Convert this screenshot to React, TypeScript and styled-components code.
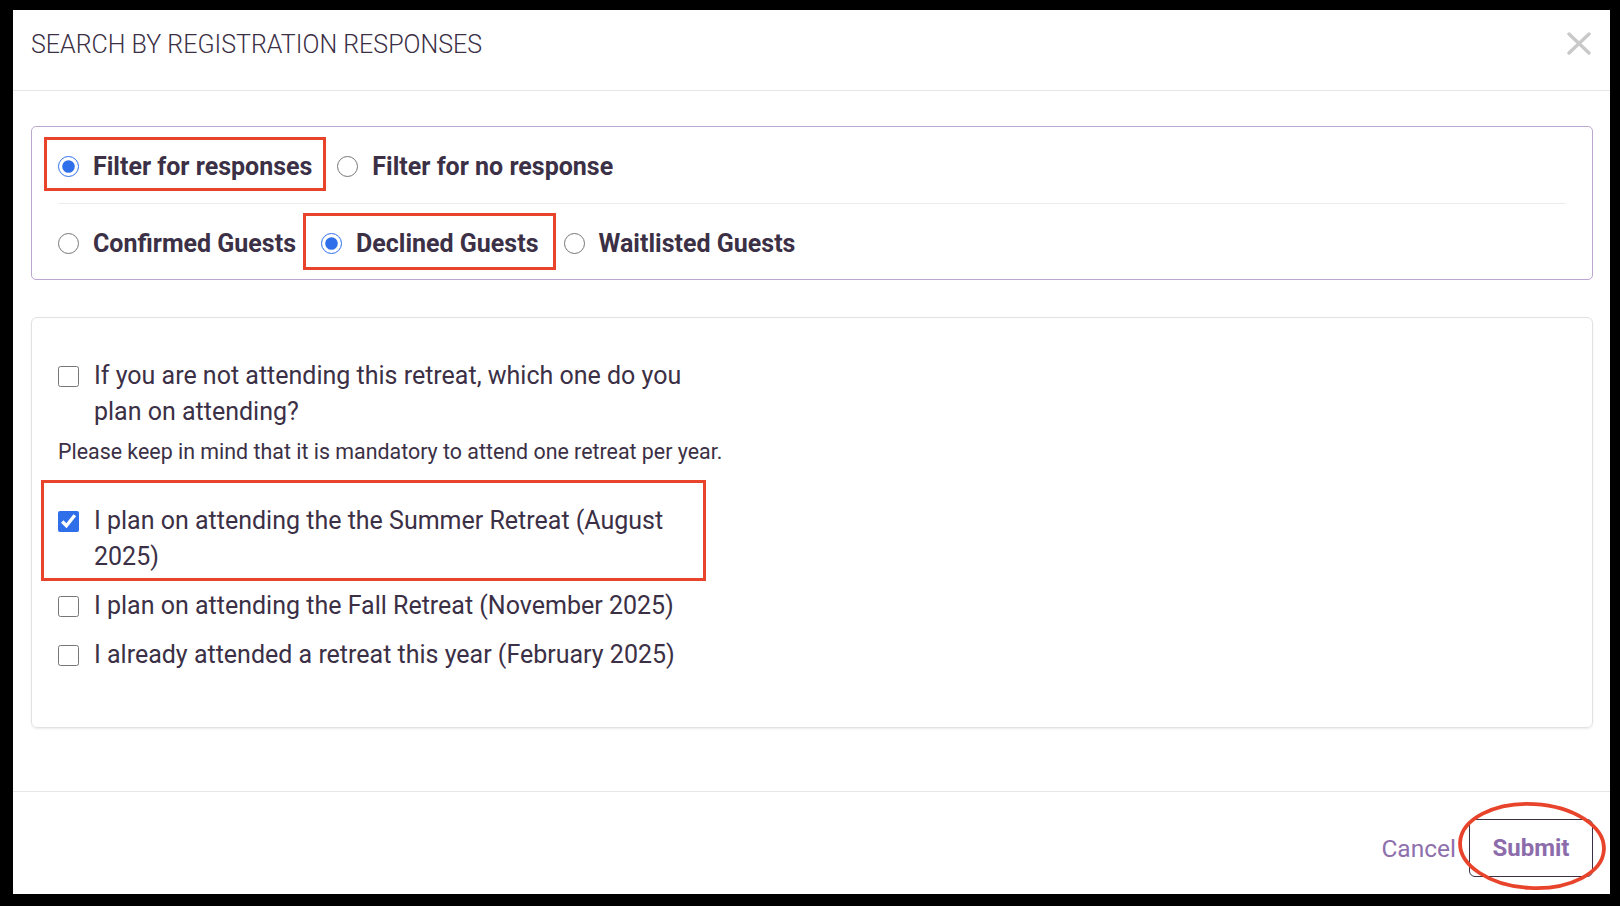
import React, { useState } from "react";
import styled, { createGlobalStyle } from "styled-components";

const GlobalStyle = createGlobalStyle`
  html, body {
    margin: 0;
    padding: 0;
    background: #000;
  }
  body {
    font-family: Roboto, "Liberation Sans", Arial, sans-serif;
    color: #3b3045;
  }
  * {
    box-sizing: border-box;
  }
`;

const ANNOTATION = "#e8432b";

const Frame = styled.div`
  width: 1620px;
  height: 906px;
  padding: 10px 10px 12px 13px;
  display: flex;
`;

const Modal = styled.div`
  flex: 1;
  background: #fff;
  display: flex;
  flex-direction: column;
`;

const Header = styled.div`
  height: 81px;
  padding: 21px 19px 0 18px;
  display: flex;
  justify-content: space-between;
  align-items: flex-start;
  border-bottom: 1px solid #e6e6e6;
`;

const Title = styled.h4`
  margin: 0;
  font-size: 25px;
  line-height: 28px;
  font-weight: 300;
  color: #3b3045;
`;

const CloseButton = styled.button`
  border: none;
  background: none;
  padding: 0;
  margin-top: 1px;
  width: 24px;
  height: 23px;
  cursor: pointer;
  display: flex;
`;

const Body = styled.div`
  flex: 1;
  padding: 35px 17px 0 18px;
  display: flex;
  flex-direction: column;
  gap: 37px;
`;

const FilterBox = styled.div`
  border: 1px solid #bca7d2;
  border-radius: 5px;
  padding: 0 26px;
`;

const Row = styled.div<{ $height: number; $shift?: number }>`
  height: ${(p) => p.$height}px;
  padding-top: ${(p) => p.$shift ?? 0}px;
  display: flex;
  align-items: center;
  gap: 25px;
`;

const Divider = styled.div`
  height: 1px;
  background: #ececec;
`;

const Option = styled.label`
  position: relative;
  display: flex;
  align-items: center;
  gap: 14px;
  height: 32px;
  font-size: 25px;
  font-weight: 700;
  color: #3b3045;
  cursor: pointer;
`;

const Radio = styled.input.attrs({ type: "radio" })`
  width: 21px;
  height: 21px;
  margin: 0;
  accent-color: #2f6fea;
  flex-shrink: 0;
`;

const Highlight = styled.span<{ $inset: string }>`
  position: absolute;
  inset: ${(p) => p.$inset};
  border: 3px solid ${ANNOTATION};
  pointer-events: none;
`;

const QuestionBox = styled.div`
  border: 1px solid #e2e2e2;
  border-radius: 6px;
  box-shadow: 0 1px 2px rgba(0, 0, 0, 0.08);
  padding: 40px 26px 54px;
`;

const Column = styled.div`
  width: 720px;
  display: flex;
  flex-direction: column;
  align-items: flex-start;
`;

const Check = styled.label<{ $gap?: number }>`
  position: relative;
  display: flex;
  align-items: flex-start;
  gap: 15px;
  margin-top: ${(p) => p.$gap ?? 0}px;
  font-size: 25px;
  line-height: 36px;
  color: #3b3045;
  cursor: pointer;
`;

const CheckText = styled.span`
  max-width: 614px;
`;

const Checkbox = styled.input.attrs({ type: "checkbox" })`
  width: 21px;
  height: 21px;
  margin: 8px 0 0;
  accent-color: #2f6fea;
  flex-shrink: 0;
`;

const Help = styled.p`
  margin: 10px 0 0;
  font-size: 21.4px;
  line-height: 24px;
  color: #3b3045;
`;

const Footer = styled.div`
  height: 103px;
  border-top: 1px solid #e6e6e6;
  padding: 10px 17px 0 0;
  display: flex;
  justify-content: flex-end;
  align-items: center;
  gap: 13px;
`;

const CancelButton = styled.button`
  border: none;
  background: none;
  padding: 0;
  font-family: inherit;
  font-size: 24.5px;
  color: #8e70ad;
  cursor: pointer;
`;

const SubmitButton = styled.button`
  position: relative;
  width: 124px;
  height: 58px;
  border: 1px solid #3b3045;
  border-radius: 6px;
  background: #fff;
  font-family: inherit;
  font-size: 24px;
  font-weight: 700;
  color: #8c6cab;
  cursor: pointer;
`;

const Ring = styled.svg`
  position: absolute;
  left: -12px;
  top: -18px;
  width: 148px;
  height: 88px;
  overflow: visible;
  pointer-events: none;
`;

const options = [
  {
    label: "I plan on attending the the Summer Retreat (August 2025)",
    highlighted: true,
  },
  { label: "I plan on attending the Fall Retreat (November 2025)" },
  { label: "I already attended a retreat this year (February 2025)" },
];

export default function App() {
  const [mode, setMode] = useState("responses");
  const [status, setStatus] = useState("declined");
  const [question, setQuestion] = useState(false);
  const [picked, setPicked] = useState<boolean[]>([true, false, false]);

  const toggle = (index: number) => {
    setPicked(picked.map((v, i) => (i === index ? !v : v)));
  };

  return (
    <>
      <GlobalStyle />
      <Frame>
        <Modal>
          <Header>
            <Title>SEARCH BY REGISTRATION RESPONSES</Title>
            <CloseButton aria-label="Close">
              <svg width="24" height="23" viewBox="0 0 24 23">
                <path
                  d="M2 2 L22 21 M22 2 L2 21"
                  stroke="#c9c9c9"
                  strokeWidth="3.4"
                  strokeLinecap="round"
                />
              </svg>
            </CloseButton>
          </Header>

          <Body>
            <FilterBox>
              <Row $height={76} $shift={2}>
                <Option>
                  <Radio
                    name="mode"
                    checked={mode === "responses"}
                    onChange={() => setMode("responses")}
                  />
                  Filter for responses
                  <Highlight $inset="-13px -14px -9px -14px" />
                </Option>
                <Option>
                  <Radio
                    name="mode"
                    checked={mode === "none"}
                    onChange={() => setMode("none")}
                  />
                  Filter for no response
                </Option>
              </Row>
              <Divider />
              <Row $height={75} $shift={4}>
                <Option>
                  <Radio
                    name="status"
                    checked={status === "confirmed"}
                    onChange={() => setStatus("confirmed")}
                  />
                  Confirmed Guests
                </Option>
                <Option>
                  <Radio
                    name="status"
                    checked={status === "declined"}
                    onChange={() => setStatus("declined")}
                  />
                  Declined Guests
                  <Highlight $inset="-15px -17px -10px -18px" />
                </Option>
                <Option>
                  <Radio
                    name="status"
                    checked={status === "waitlisted"}
                    onChange={() => setStatus("waitlisted")}
                  />
                  Waitlisted Guests
                </Option>
              </Row>
            </FilterBox>

            <QuestionBox>
              <Column>
                <Check>
                  <Checkbox
                    checked={question}
                    onChange={() => setQuestion(!question)}
                  />
                  <CheckText>
                    If you are not attending this retreat, which one do you plan
                    on attending?
                  </CheckText>
                </Check>
                <Help>
                  Please keep in mind that it is mandatory to attend one retreat
                  per year.
                </Help>
                {options.map((opt, i) => (
                  <Check key={opt.label} $gap={i === 0 ? 39 : 13}>
                    <Checkbox checked={picked[i]} onChange={() => toggle(i)} />
                    <CheckText>{opt.label}</CheckText>
                    {opt.highlighted && (
                      <Highlight $inset="-23px 2px -6px -17px" />
                    )}
                  </Check>
                ))}
              </Column>
            </QuestionBox>
          </Body>

          <Footer>
            <CancelButton>Cancel</CancelButton>
            <SubmitButton>
              Submit
              <Ring viewBox="0 0 148 88">
                <ellipse
                  cx="74"
                  cy="44"
                  rx="72"
                  ry="42"
                  fill="none"
                  stroke={ANNOTATION}
                  strokeWidth="3.8"
                  transform="rotate(3 74 44)"
                />
              </Ring>
            </SubmitButton>
          </Footer>
        </Modal>
      </Frame>
    </>
  );
}
